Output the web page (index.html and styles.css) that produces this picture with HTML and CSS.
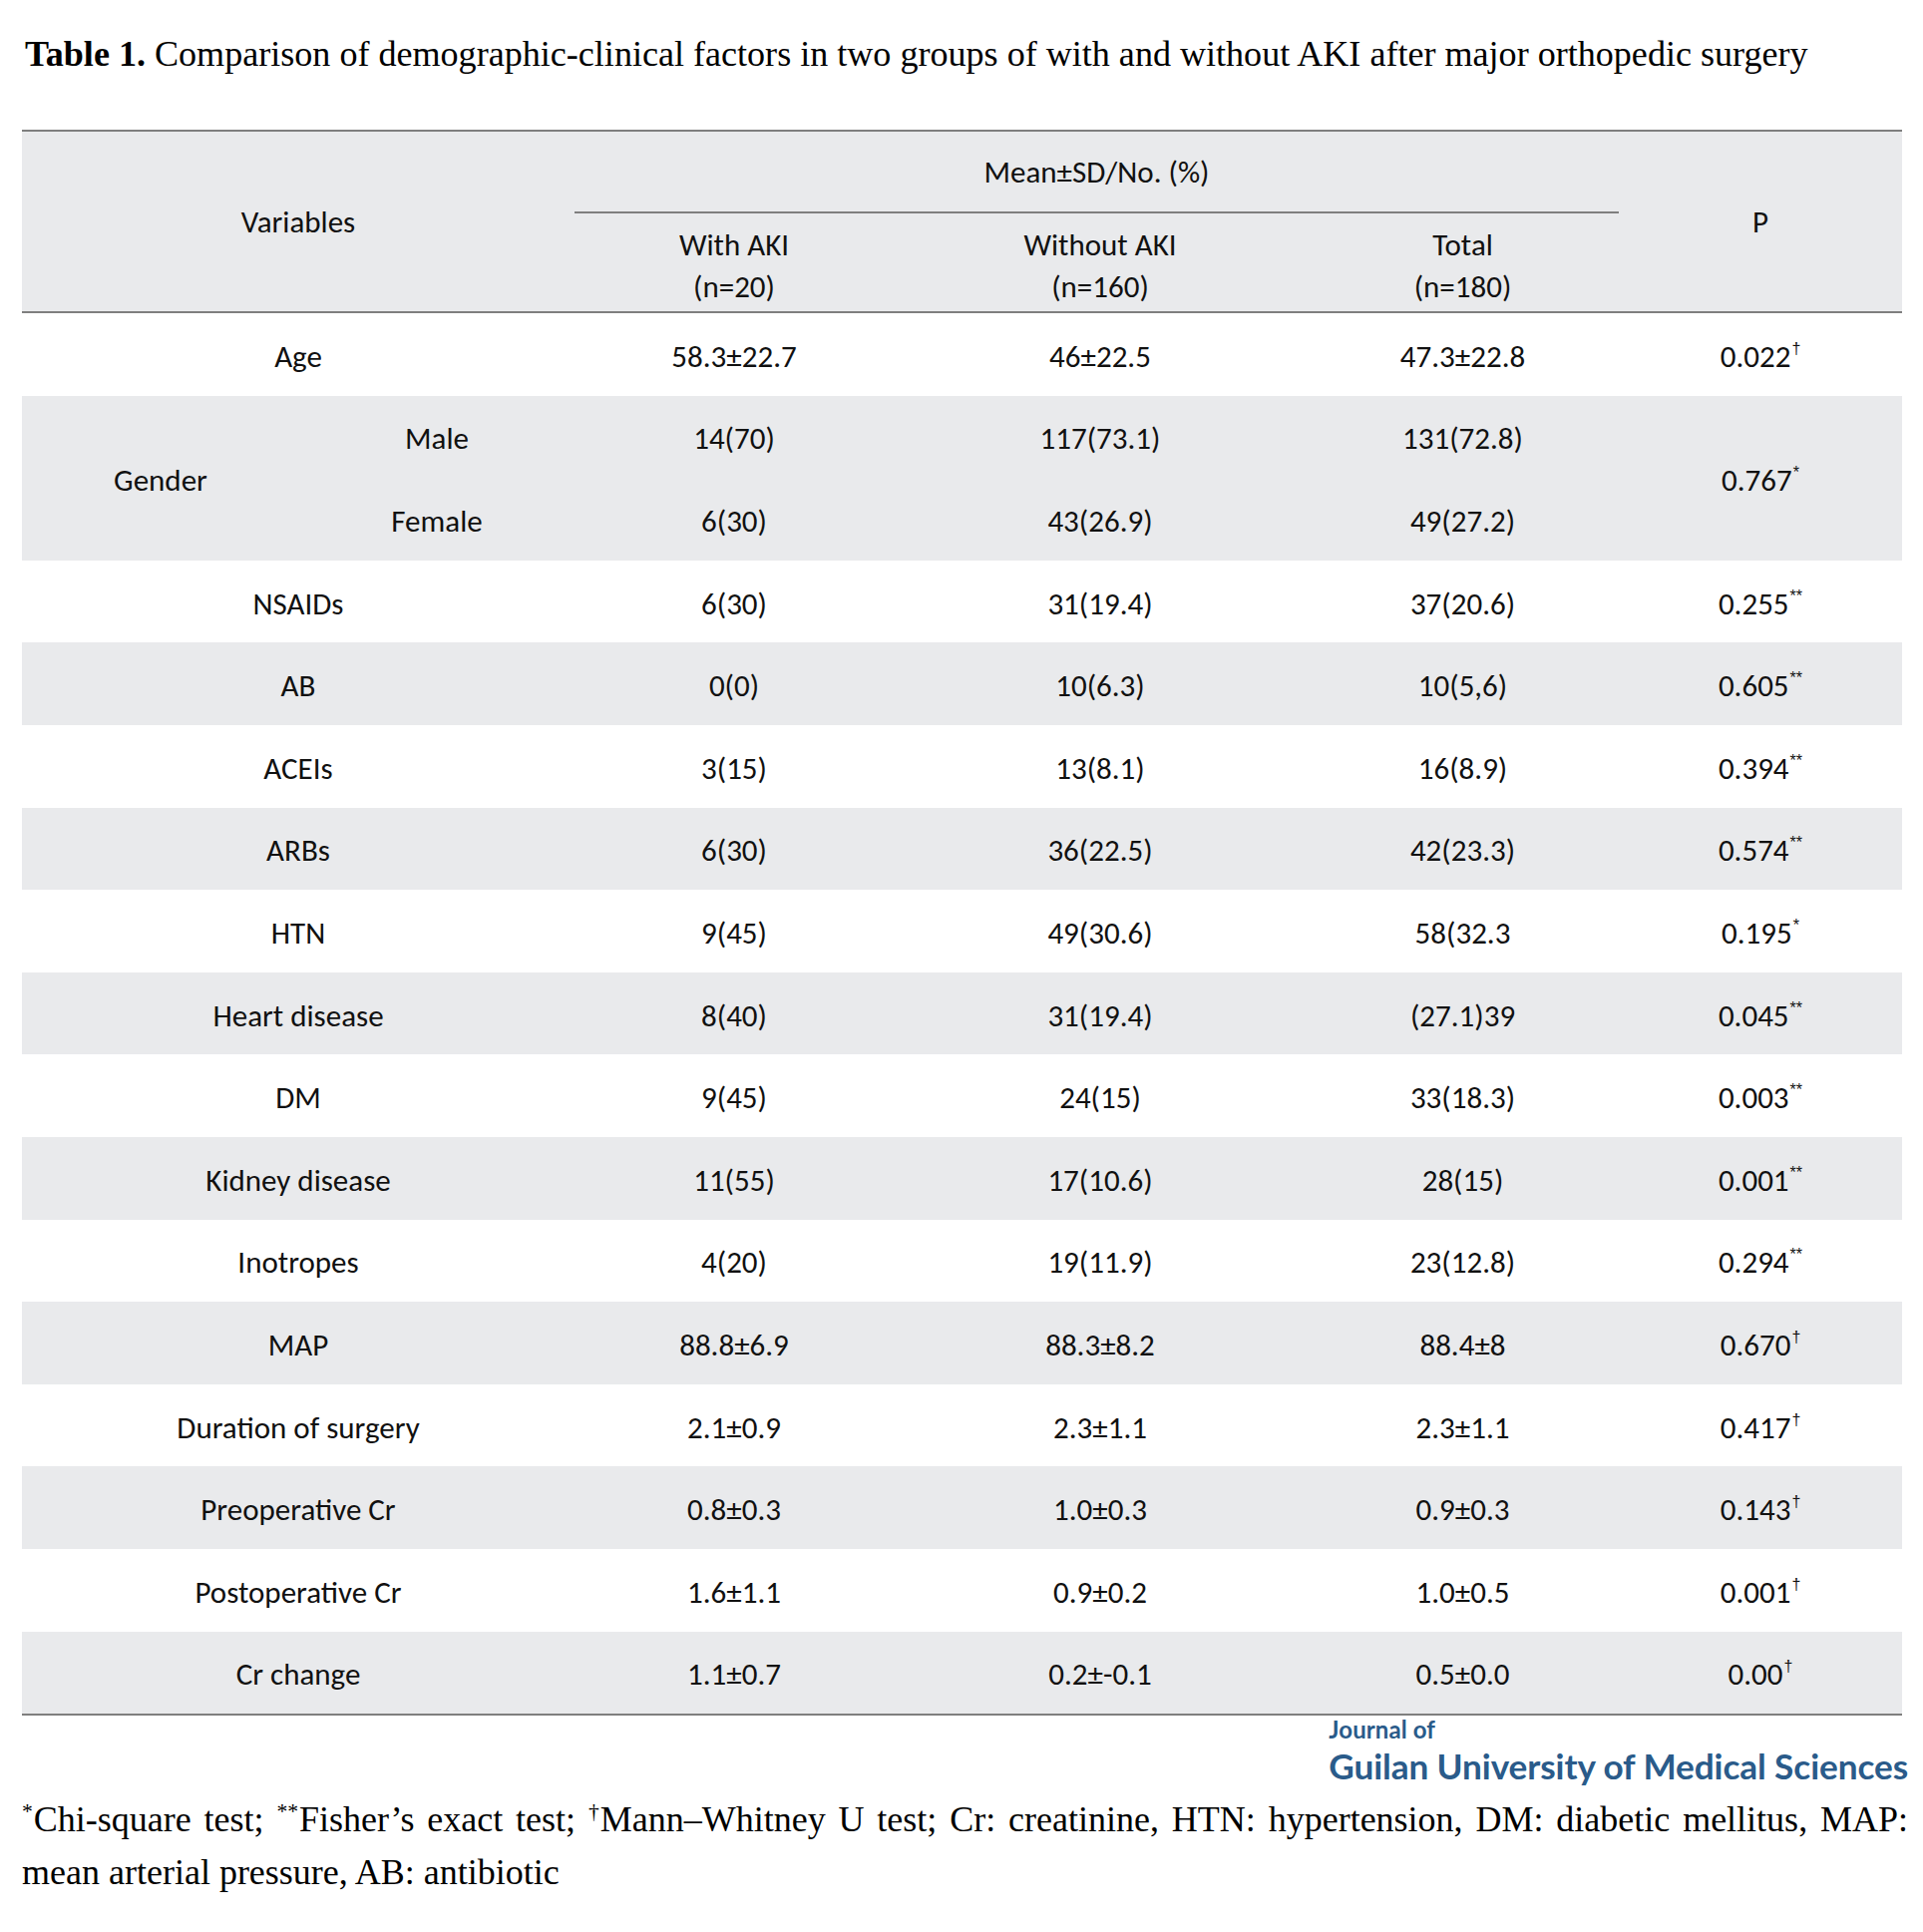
FILE: index.html
```html
<!DOCTYPE html>
<html lang="en">
<head>
<meta charset="utf-8">
<title>Table 1</title>
<link rel="stylesheet" href="styles.css">
</head>
<body>
<div class="page">
  <p class="caption"><b>Table 1.</b> Comparison of demographic-clinical factors in two groups of with and without AKI after major orthopedic surgery</p>
  <table class="data">
    <colgroup>
      <col class="c1a"><col class="c1b"><col class="c2"><col class="c3"><col class="c4"><col class="c5">
    </colgroup>
    <thead>
      <tr class="h1">
        <th colspan="2" rowspan="2" class="bb">Variables</th>
        <th colspan="3" class="group">Mean±SD/No. (%)</th>
        <th rowspan="2" class="bb">P</th>
      </tr>
      <tr class="h2">
        <th class="bb sub">With AKI<br>(n=20)</th>
        <th class="bb sub">Without AKI<br>(n=160)</th>
        <th class="bb sub">Total<br>(n=180)</th>
      </tr>
    </thead>
    <tbody>
      <tr><td colspan="2">Age</td><td>58.3±22.7</td><td>46±22.5</td><td>47.3±22.8</td><td>0.022<sup>†</sup></td></tr>
      <tr class="alt"><td rowspan="2">Gender</td><td>Male</td><td>14(70)</td><td>117(73.1)</td><td>131(72.8)</td><td rowspan="2">0.767<sup>*</sup></td></tr>
      <tr class="alt"><td>Female</td><td>6(30)</td><td>43(26.9)</td><td>49(27.2)</td></tr>
      <tr><td colspan="2">NSAIDs</td><td>6(30)</td><td>31(19.4)</td><td>37(20.6)</td><td>0.255<sup>**</sup></td></tr>
      <tr class="alt"><td colspan="2">AB</td><td>0(0)</td><td>10(6.3)</td><td>10(5,6)</td><td>0.605<sup>**</sup></td></tr>
      <tr><td colspan="2">ACEIs</td><td>3(15)</td><td>13(8.1)</td><td>16(8.9)</td><td>0.394<sup>**</sup></td></tr>
      <tr class="alt"><td colspan="2">ARBs</td><td>6(30)</td><td>36(22.5)</td><td>42(23.3)</td><td>0.574<sup>**</sup></td></tr>
      <tr><td colspan="2">HTN</td><td>9(45)</td><td>49(30.6)</td><td>58(32.3</td><td>0.195<sup>*</sup></td></tr>
      <tr class="alt"><td colspan="2">Heart disease</td><td>8(40)</td><td>31(19.4)</td><td>(27.1)39</td><td>0.045<sup>**</sup></td></tr>
      <tr><td colspan="2">DM</td><td>9(45)</td><td>24(15)</td><td>33(18.3)</td><td>0.003<sup>**</sup></td></tr>
      <tr class="alt"><td colspan="2">Kidney disease</td><td>11(55)</td><td>17(10.6)</td><td>28(15)</td><td>0.001<sup>**</sup></td></tr>
      <tr><td colspan="2">Inotropes</td><td>4(20)</td><td>19(11.9)</td><td>23(12.8)</td><td>0.294<sup>**</sup></td></tr>
      <tr class="alt"><td colspan="2">MAP</td><td>88.8±6.9</td><td>88.3±8.2</td><td>88.4±8</td><td>0.670<sup>†</sup></td></tr>
      <tr><td colspan="2">Duration of surgery</td><td>2.1±0.9</td><td>2.3±1.1</td><td>2.3±1.1</td><td>0.417<sup>†</sup></td></tr>
      <tr class="alt"><td colspan="2">Preoperative Cr</td><td>0.8±0.3</td><td>1.0±0.3</td><td>0.9±0.3</td><td>0.143<sup>†</sup></td></tr>
      <tr><td colspan="2">Postoperative Cr</td><td>1.6±1.1</td><td>0.9±0.2</td><td>1.0±0.5</td><td>0.001<sup>†</sup></td></tr>
      <tr class="alt"><td colspan="2">Cr change</td><td>1.1±0.7</td><td>0.2±-0.1</td><td>0.5±0.0</td><td>0.00<sup>†</sup></td></tr>
    </tbody>
  </table>
  <div class="logo-row">
    <div class="logo">
      <div class="logo-small">Journal of</div>
      <div class="logo-big">Guilan University of Medical Sciences</div>
    </div>
  </div>
  <p class="note"><sup>*</sup>Chi-square test; <sup>**</sup>Fisher’s exact test; <sup>†</sup><span>Mann–Whitney U test; Cr: creatinine, HTN: hypertension, DM: diabetic mellitus, MAP: </span><span>mean arterial pressure, AB: antibiotic</span></p>
</div>
</body>
</html>
```

FILE: styles.css
```css
html, body {
  margin: 0;
  padding: 0;
  background: #ffffff;
}

.page {
  width: 1891px;
  padding: 32px 0 0 22px;
}

.caption {
  margin: 0;
  font-family: "Liberation Serif", "Times New Roman", serif;
  font-size: 36.1px;
  line-height: 44px;
  color: #000;
  padding-left: 3px;
}

.caption b {
  font-weight: bold;
}

.data {
  margin-top: 54px;
  width: 1885px;
  table-layout: fixed;
  border-collapse: separate;
  border-spacing: 0;
  border-top: 2px solid #7f7f7f;
  border-bottom: 2px solid #7f7f7f;
  font-family: Calibri, Carlito, Lato, sans-serif;
  font-size: 31px;
  color: #111;
}

.c1a { width: 278px; }
.c1b { width: 276px; }
.c2 { width: 320px; }
.c3 { width: 414px; }
.c4 { width: 313px; }
.c5 { width: 284px; }

.data th,
.data td {
  padding: 0;
  text-align: center;
  vertical-align: middle;
  font-weight: normal;
  line-height: 42px;
}

.data thead th {
  background: #e9eaec;
}

.data .h1 { height: 82px; }
.data .h2 { height: 100px; }

.data .group {
  border-bottom: 2px solid #7f7f7f;
}

.data .bb {
  border-bottom: 2px solid #7f7f7f;
}

.data .sub {
  padding-top: 6px;
}

.data tbody tr {
  height: 82.6px;
}

.data tbody td {
  padding-top: 3px;
}

.data tbody tr.alt td {
  background: #e9eaec;
}

.data sup {
  font-family: "Liberation Sans", Arial, sans-serif;
  font-size: 52%;
  line-height: 0;
  vertical-align: 0.8em;
  margin-left: 1px;
}

.logo-row {
  display: flex;
  justify-content: flex-end;
  margin-top: 1px;
}

.logo {
  font-family: Lato, "Open Sans", sans-serif;
  font-weight: 700;
  color: #2a5b8a;
}

.logo-small {
  font-size: 24px;
  line-height: 26px;
  letter-spacing: 0.1px;
}

.logo-big {
  margin-top: 8px;
  font-size: 35.2px;
  line-height: 30px;
  letter-spacing: -0.1px;
}

.note {
  margin: 13px 0 0 0;
  font-family: "Liberation Serif", "Times New Roman", serif;
  font-size: 36px;
  line-height: 53px;
  text-align: justify;
  color: #000;
}

.note sup {
  display: inline-block;
  font-size: 60%;
  line-height: 1;
  vertical-align: 0.6em;
  margin-right: 1px;
}
```
